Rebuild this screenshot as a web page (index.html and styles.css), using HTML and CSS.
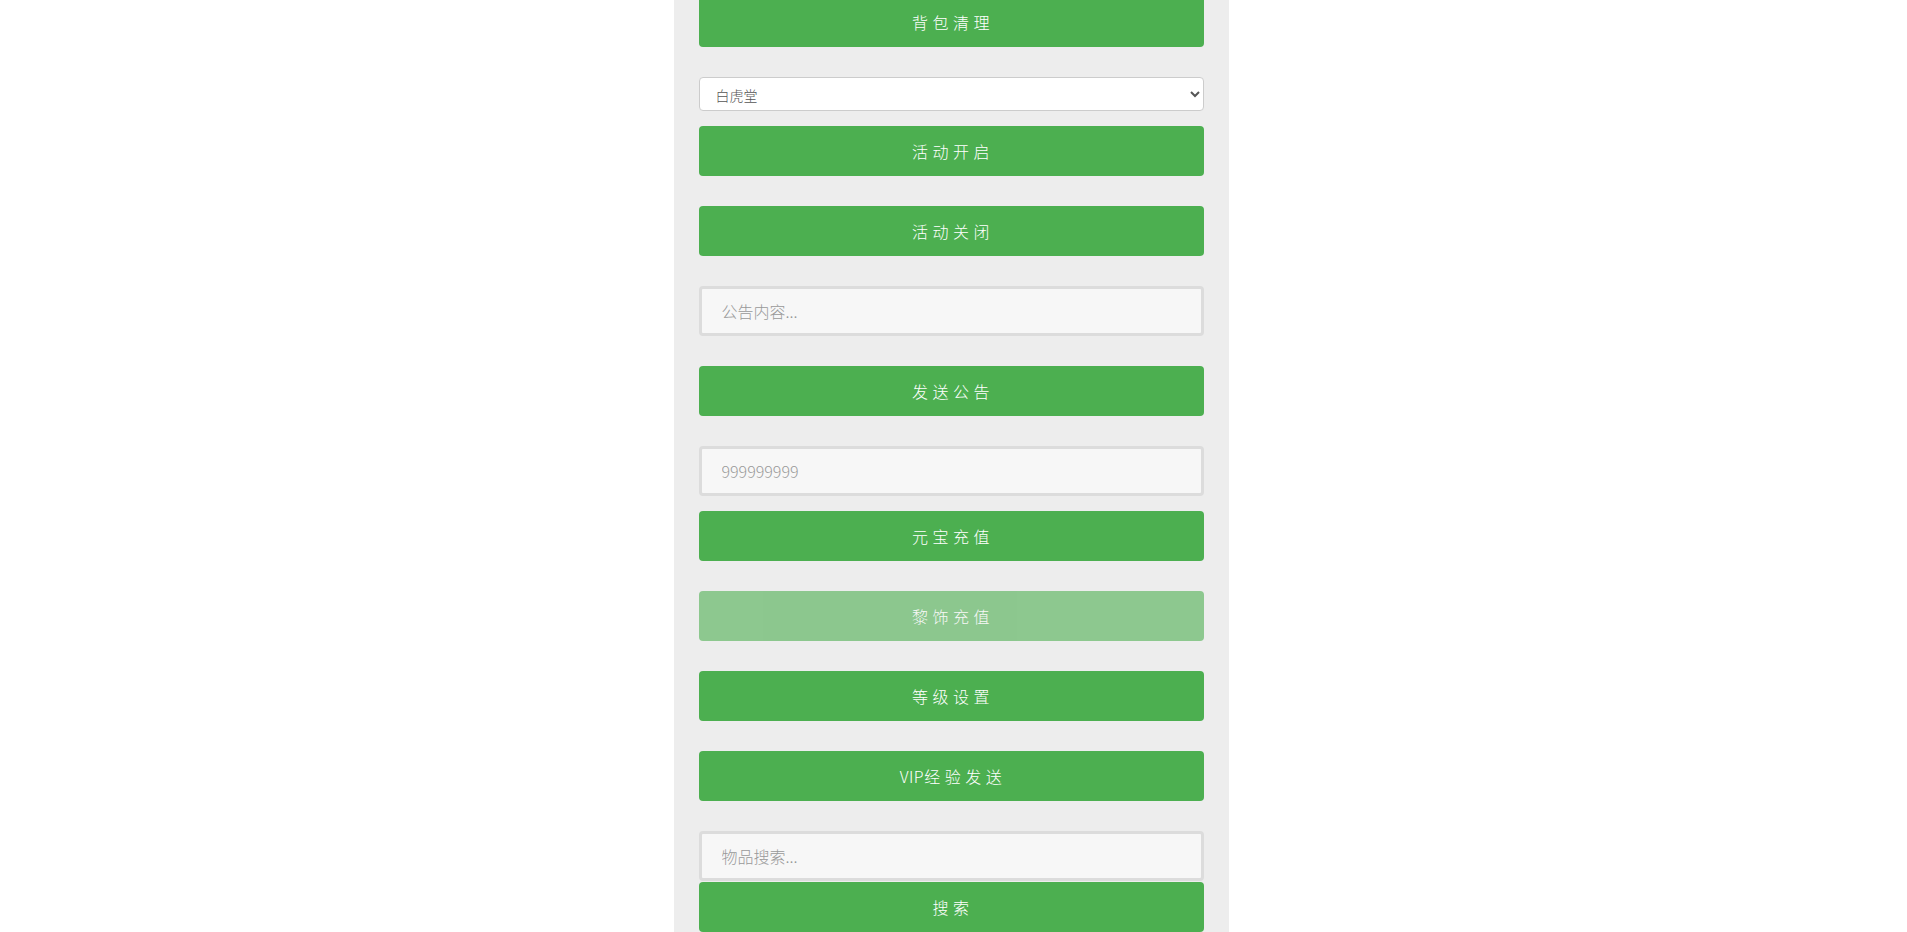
FILE: index.html
```html
<!DOCTYPE html>
<html lang="zh-CN">
<head>
    <meta charset="UTF-8">
    <meta name="viewport" content="width=device-width, initial-scale=1.0">
    <title>GM管理</title>
    <link rel="stylesheet" href="styles.css">
</head>
<body>
    <div class="panel">
        <button class="btn btn-first">背 包 清 理</button>

        <select class="form-select gap-s">
            <option>白虎堂</option>
            <option>青龙堂</option>
            <option>朱雀堂</option>
            <option>玄武堂</option>
        </select>

        <button class="btn">活 动 开 启</button>
        <button class="btn">活 动 关 闭</button>

        <input type="text" class="field" placeholder="公告内容...">
        <button class="btn">发 送 公 告</button>

        <input type="text" class="field gap-s" placeholder="999999999">
        <button class="btn">元 宝 充 值</button>
        <button class="btn" disabled>黎 饰 充 值</button>
        <button class="btn">等 级 设 置</button>
        <button class="btn">VIP经 验 发 送</button>

        <input type="text" class="field gap-none" placeholder="物品搜索...">
        <button class="btn">搜 索</button>
    </div>
</body>
</html>
```

FILE: styles.css
```css
html {
    overflow-y: scroll;
}
::-webkit-scrollbar {
    width: 5px;
}
::-webkit-scrollbar-track {
    background-color: #f1f1f1;
}
::-webkit-scrollbar-thumb {
    background-color: #c1c1c1;
}
body {
    margin: 0;
    padding-right: 5px;
    background-color: #fff;
    font-family: "Noto Sans CJK SC", "Noto Sans", sans-serif;
    font-weight: 300;
}
.panel {
    box-sizing: border-box;
    width: 555px;
    min-height: 100vh;
    margin: 0 auto;
    padding: 0 25px;
    background-color: #ededed;
    display: flex;
    flex-direction: column;
}
.btn {
    height: 50px;
    margin: 0 0 30px;
    padding: 0;
    background-color: #4caf50;
    color: #fff;
    border: none;
    border-radius: 4px;
    font-family: inherit;
    font-weight: inherit;
    font-size: 16px;
    letter-spacing: 0.5px;
    cursor: pointer;
}
.btn:disabled {
    opacity: 0.6;
    cursor: not-allowed;
}
.btn-first {
    margin-top: -3px;
}
.form-select {
    height: 34px;
    margin: 0 0 30px;
    padding: 6px 12px;
    background-color: #fff;
    color: #555;
    border: 1px solid #ccc;
    border-radius: 4px;
    font-family: inherit;
    font-weight: inherit;
    font-size: 14px;
}
.field {
    box-sizing: border-box;
    height: 50px;
    margin: 0 0 30px;
    padding: 0 20px;
    background-color: #f7f7f7;
    color: #555;
    border: 3px solid #dcdcdc;
    border-radius: 4px;
    font-family: inherit;
    font-weight: inherit;
    font-size: 16px;
    outline: none;
}
.field::placeholder {
    color: #999;
}
.gap-s {
    margin-bottom: 15px;
}
.gap-none {
    margin-bottom: 1px;
}
```
